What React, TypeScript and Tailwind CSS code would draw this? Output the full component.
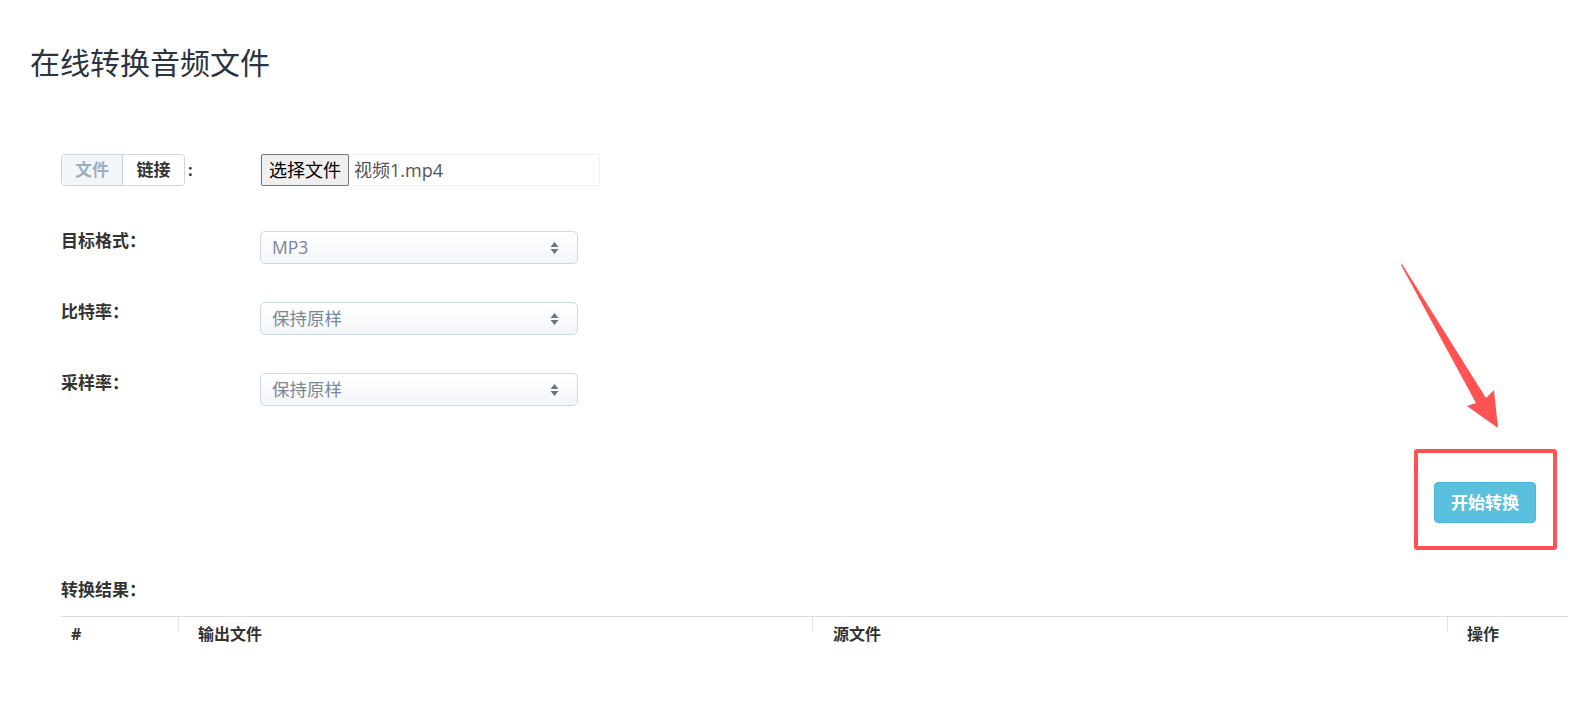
const FONT = "font-['Open_Sans','Noto_Sans_CJK_SC',sans-serif]";

function SelectBox({ value }: { value: string }) {
  return (
    <div className="flex h-[33px] w-[318px] items-center justify-between rounded-[5px] border border-[#cbd9e6] bg-gradient-to-b from-white to-[#f3f6f8] pl-[11px] pr-[18px] text-[17.5px] text-[#7b8794]">
      <span>{value}</span>
      <svg width="9" height="14" viewBox="0 0 9 14" className="text-[#6b7580]">
        <path d="M4.5 1 L8.5 6 H0.5 Z" fill="currentColor" />
        <path d="M4.5 13 L8.5 8 H0.5 Z" fill="currentColor" />
      </svg>
    </div>
  );
}

function FormRow({ label, children, className = '' }: { label: React.ReactNode; children: React.ReactNode; className?: string }) {
  return (
    <div className={`flex items-start ${className}`}>
      <div className="w-[199px] text-[17px] font-bold leading-[20px] text-[#333]">{label}</div>
      {children}
    </div>
  );
}

export default function App() {
  return (
    <div className={`relative min-h-screen bg-white ${FONT}`}>
      <h1 className="pl-[30px] pt-[42px] text-[30px] leading-[42px] text-[#2b3440]">在线转换音频文件</h1>

      <div className="mt-[70px] pl-[61px]">
        <div className="flex flex-col">
          <FormRow
            label={
              <div className="flex items-center">
                <div className="flex h-[32px] overflow-hidden rounded-[4px] border border-[#c9d7e3] text-[17px]">
                  <span className="flex w-[61px] items-center justify-center border-r border-[#c9d7e3] bg-[#f3f6f9] text-[#9eaebf]">文件</span>
                  <span className="flex w-[61px] items-center justify-center bg-white text-[#333]">链接</span>
                </div>
                <span className="ml-[3px] text-[16px]">:</span>
              </div>
            }
          >
            <div className="flex h-[32px] w-[340px] items-center gap-[5px] rounded-[3px] border border-[#f1f1f1]">
              <span className="flex h-[32px] items-center rounded-[2px] border border-[#767676] bg-[#efefef] px-[7px] text-[18px] text-black">选择文件</span>
              <span className="text-[18px] text-[#555]">视频1.mp4</span>
            </div>
          </FormRow>

          <FormRow label="目标格式：" className="mt-[45px]">
            <SelectBox value="MP3" />
          </FormRow>
          <FormRow label="比特率：" className="mt-[38px]">
            <SelectBox value="保持原样" />
          </FormRow>
          <FormRow label="采样率：" className="mt-[38px]">
            <SelectBox value="保持原样" />
          </FormRow>
        </div>

        <div className="mt-[76px] flex justify-end pr-[34px]">
          <button className="h-[41px] w-[102px] rounded-[4px] border border-[#46b8da] bg-[#5bc0de] text-[17px] font-bold text-white">
            开始转换
          </button>
        </div>

        <div className="mt-[57px] text-[17px] font-bold leading-[20px] text-[#333]">转换结果：</div>

        <div className="mt-[16px] mr-[2px] flex border-t border-[#dcdcdc] text-[16px] font-bold leading-[22px] text-[#333]">
          <div className="w-[117px] px-[10px] pt-[6px]">#</div>
          <div className="relative w-[634px] pl-[20px] pt-[6px]">
            <span className="absolute left-0 top-0 h-[14px] w-px bg-[#e3e3e3]" />
            输出文件
          </div>
          <div className="relative w-[635px] pl-[21px] pt-[6px]">
            <span className="absolute left-0 top-0 h-[14px] w-px bg-[#e3e3e3]" />
            源文件
          </div>
          <div className="relative flex-1 pl-[20px] pt-[6px]">
            <span className="absolute left-0 top-0 h-[14px] w-px bg-[#e3e3e3]" />
            操作
          </div>
        </div>
      </div>

      {/* callout pointing at the convert button */}
      <div className="pointer-events-none absolute left-[1414px] top-[449px] h-[101px] w-[143px] rounded-[3px] border-4 border-[#ff5252]" />
      <svg className="pointer-events-none absolute left-[1390px] top-[260px]" width="120" height="175" viewBox="0 0 120 175">
        <path d="M11 5 L12 4 L96 138 L104 130 L108 168 L77 146 L86 143 Z" fill="#ff5252" />
      </svg>
    </div>
  );
}
